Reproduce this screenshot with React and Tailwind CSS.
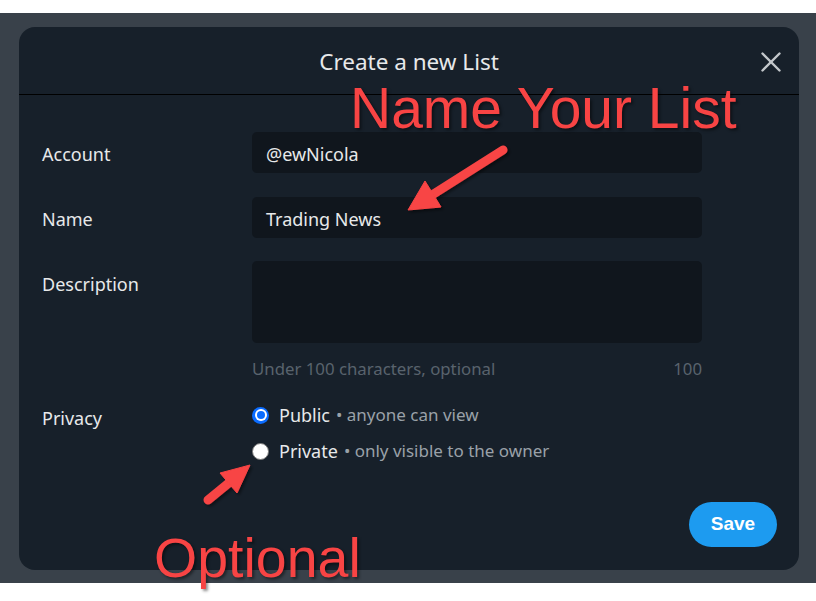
import { X } from "lucide-react";

function Radio({ checked }) {
  if (checked) {
    return (
      <span className="flex h-[17px] w-[17px] items-center justify-center rounded-full bg-[#0b6cff]">
        <span className="flex h-[12px] w-[12px] items-center justify-center rounded-full bg-white">
          <span className="h-[8px] w-[8px] rounded-full bg-[#0b6cff]" />
        </span>
      </span>
    );
  }
  return <span className="h-[17px] w-[17px] rounded-full border border-[#7a7a7a] bg-white" />;
}

function Row({ label, children, className = "" }) {
  return (
    <div className={"flex " + className}>
      <div className="w-[210px] shrink-0 text-[18px] text-[#e7e9ea]">{label}</div>
      {children}
    </div>
  );
}

export default function App() {
  return (
    <div className="relative h-[601px] w-[816px] overflow-hidden bg-white font-['Noto_Sans',sans-serif]">
      <div className="mt-[13px] h-[570px] bg-[#39414a] pl-[19px] pt-[14px]">
        <div className="flex h-[543px] w-[780px] flex-col rounded-[16px] bg-[#17202a]">
          <div className="relative flex h-[68px] items-center justify-center border-b border-black pt-[3px]">
            <span className="text-[22.5px] text-[#e7e9ea]">Create a new List</span>
            <X className="absolute right-[11px] top-[18px] h-[34px] w-[34px] text-[#c3c7cb]" strokeWidth={1.7} />
          </div>

          <div className="flex flex-1 flex-col pl-[23px] pt-[37px]">
            <Row label={<div className="pt-[3px]">Account</div>} className="h-[41px] items-center">
              <div className="flex h-[41px] w-[450px] items-center rounded-[5px] bg-[#10161d] pl-[14px] pt-[3px] text-[18px] text-[#e7e9ea]">
                @ewNicola
              </div>
            </Row>
            <Row label={<div className="pt-[3px]">Name</div>} className="mt-[24px] h-[41px] items-center">
              <div className="flex h-[41px] w-[450px] items-center rounded-[5px] bg-[#10161d] pl-[14px] pt-[3px] text-[18px] text-[#e7e9ea]">
                Trading News
              </div>
            </Row>
            <Row label={<div className="pt-[10px]">Description</div>} className="mt-[23px]">
              <div className="h-[82px] w-[450px] rounded-[5px] bg-[#10161d]" />
            </Row>
            <div className="mt-[14px] flex w-[660px] justify-between pl-[210px] text-[16.8px] leading-[24px] text-[#59636d]">
              <span>Under 100 characters, optional</span>
              <span>100</span>
            </div>
            <Row label={<div className="pt-[2px]">Privacy</div>} className="mt-[22px]">
              <div className="flex flex-col gap-[12px]">
                <div className="flex h-[24px] items-center">
                  <Radio checked />
                  <span className="ml-[10px] text-[18px] text-[#e7e9ea]">Public</span>
                  <span className="ml-[6px] text-[17px] text-[#9aa1a8]">• anyone can view</span>
                </div>
                <div className="flex h-[24px] items-center">
                  <Radio />
                  <span className="ml-[10px] text-[18px] text-[#e7e9ea]">Private</span>
                  <span className="ml-[6px] text-[17px] text-[#9aa1a8]">• only visible to the owner</span>
                </div>
              </div>
            </Row>
            <div className="mt-auto flex justify-end pb-[23px] pr-[22px]">
              <button className="h-[45px] w-[88px] rounded-full bg-[#1d9bf0] font-['Liberation_Sans',sans-serif] text-[19px] font-bold text-white">
                Save
              </button>
            </div>
          </div>
        </div>
      </div>

      <div className="absolute left-[350px] top-[80px] font-['Liberation_Sans',Arial,sans-serif] text-[57px] leading-[57px] text-[#f84444] [text-shadow:2px_2px_3px_rgba(0,0,0,0.45)]">
        Name Your List
      </div>
      <div className="absolute left-[154px] top-[530px] font-['Liberation_Sans',Arial,sans-serif] text-[55.5px] leading-[56px] text-[#f84444] [text-shadow:2px_2px_3px_rgba(0,0,0,0.45)]">
        Optional
      </div>

      <svg className="pointer-events-none absolute left-0 top-0" width="816" height="601">
        <defs>
          <filter id="sh" x="-20%" y="-20%" width="140%" height="140%">
            <feDropShadow dx="2" dy="2" stdDeviation="1.5" floodColor="#000" floodOpacity="0.45" />
          </filter>
        </defs>
        <g fill="#f84444" stroke="#f84444" filter="url(#sh)">
          <line x1="503" y1="150" x2="432" y2="195" strokeWidth="9" strokeLinecap="round" />
          <polygon points="408,210 441,207 425,181" strokeWidth="1" strokeLinejoin="round" />
          <line x1="208" y1="500" x2="230" y2="482" strokeWidth="9" strokeLinecap="round" />
          <polygon points="250,465 237,493 220,473" strokeWidth="1" strokeLinejoin="round" />
        </g>
      </svg>
    </div>
  );
}
